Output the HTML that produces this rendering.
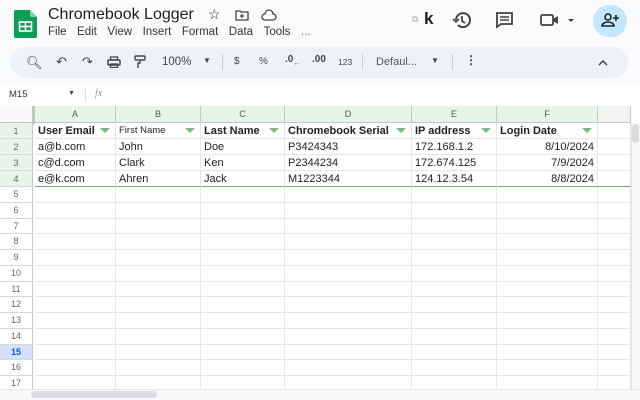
<!DOCTYPE html>
<html><head><meta charset="utf-8"><style>
*{margin:0;padding:0;box-sizing:border-box}
body{width:640px;height:400px;overflow:hidden;background:#f9fbfd;font-family:"Liberation Sans",Arial,sans-serif;position:relative;color:#1f1f1f}
.a{position:absolute}
.menu span{margin-right:10.5px}
.tb{color:#444;font-size:11px}
.grid{position:absolute;left:0;top:106px;width:640px;height:294px;background:#fff}
.ch{position:absolute;top:0;height:17px;background:#e6f4ea;border-right:1px solid #c4c7c5;border-bottom:1px solid #c4c7c5;font-size:9px;color:#555;text-align:center;line-height:16px}
.rh{position:absolute;left:0;width:33px;border-bottom:1px solid #d8d8d8;font-size:9px;color:#666;text-align:center}
.c{position:absolute;border-right:1px solid #e6e6e6;border-bottom:1px solid #e6e6e6;font-size:11px;padding-left:3px;white-space:nowrap;overflow:hidden;color:#222}
.f{position:absolute;right:5px;top:5px;width:0;height:0;border-left:5px solid transparent;border-right:5px solid transparent;border-top:5px solid #7cb88a}
</style></head><body>
<svg class="a" style="left:14px;top:10px" width="24" height="28" viewBox="0 0 24 28"><path d="M2 0h14l7 7v19a2 2 0 0 1-2 2H2a2 2 0 0 1-2-2V2a2 2 0 0 1 2-2z" fill="#0f9d58"/><path d="M16 0l7 7h-5a2 2 0 0 1-2-2z" fill="#87ceac"/><rect x="5.5" y="12" width="12" height="9" fill="none" stroke="#fff" stroke-width="1.6"/><line x1="5.5" y1="16.5" x2="17.5" y2="16.5" stroke="#fff" stroke-width="1.6"/><line x1="11.5" y1="12" x2="11.5" y2="21" stroke="#fff" stroke-width="1.6"/></svg>
<div class="a" style="left:48px;top:6px;font-size:16px;color:#1f1f1f">Chromebook Logger</div>
<div class="a" style="left:208px;top:6px;font-size:14px">☆</div>
<svg class="a" style="left:235px;top:9px" width="14" height="12"><path d="M1 2h4l1 1h7v8H1z" fill="none" stroke="#444" stroke-width="1.3"/><path d="M7 5v4M5 7h4" stroke="#444" stroke-width="1.2"/></svg>
<svg class="a" style="left:261px;top:9px" width="16" height="12"><path d="M4 11h8a3 3 0 0 0 0-6 4 4 0 0 0-8 0 3 3 0 0 0 0 6z" fill="none" stroke="#444" stroke-width="1.3"/></svg>
<div class="a menu" style="left:48px;top:26px;font-size:11.5px;color:#333"><span>File</span><span>Edit</span><span>View</span><span>Insert</span><span>Format</span><span>Data</span><span>Tools</span><span style="color:#777">...</span></div>
<div class="a" style="left:412px;top:14px;font-size:9px;color:#aaa">⧉</div>
<div class="a" style="left:424px;top:9px;font-size:17px;font-weight:bold">k</div>
<svg class="a" style="left:452px;top:10px" width="20" height="20" viewBox="0 0 20 20"><path d="M4 10a7 7 0 1 1 2 5" fill="none" stroke="#444" stroke-width="2"/><path d="M1 9l3 3 3-3" fill="none" stroke="#444" stroke-width="1.6"/><path d="M10 6v5l3 2" fill="none" stroke="#444" stroke-width="1.8"/></svg>
<svg class="a" style="left:495px;top:11px" width="20" height="18"><path d="M2 2h15v11H6l-4 3z" fill="none" stroke="#444" stroke-width="1.8"/><path d="M5 6h9M5 9h9" stroke="#444" stroke-width="1.5"/></svg>
<svg class="a" style="left:540px;top:12px" width="36" height="16"><rect x="1" y="3" width="12" height="10" rx="1.5" fill="none" stroke="#444" stroke-width="1.8"/><path d="M13 7l5-3v8l-5-3z" fill="#444"/><path d="M28 7h6l-3 3z" fill="#444"/></svg>
<div class="a" style="left:593px;top:5px;width:34px;height:32px;border-radius:16px;background:#c2e7ff"></div>
<svg class="a" style="left:601px;top:12px" width="18" height="16"><circle cx="7" cy="5" r="3" fill="none" stroke="#222" stroke-width="1.6"/><path d="M1 14a6 4 0 0 1 12 0z" fill="none" stroke="#222" stroke-width="1.6"/><path d="M15 3v6M12 6h6" stroke="#222" stroke-width="1.6"/></svg>
<div class="a" style="left:10px;top:47px;width:618px;height:31px;border-radius:16px;background:#edf2fa"></div>
<div class="a tb" style="left:26px;top:55px;font-size:13px">🔍︎</div>
<div class="a tb" style="left:56px;top:54px;font-size:13px">↶</div>
<div class="a tb" style="left:82px;top:54px;font-size:13px">↷</div>
<svg class="a" style="left:107px;top:56px" width="14" height="12"><rect x="1" y="4" width="12" height="5" rx="1" fill="none" stroke="#444" stroke-width="1.5"/><rect x="3.5" y="1" width="7" height="3" fill="none" stroke="#444" stroke-width="1.3"/><rect x="3.5" y="8" width="7" height="3.5" fill="none" stroke="#444" stroke-width="1.3"/></svg>
<svg class="a" style="left:134px;top:55px" width="12" height="14"><rect x="1" y="1" width="10" height="4" rx="1" fill="none" stroke="#444" stroke-width="1.4"/><path d="M6 5v3H4v5" fill="none" stroke="#444" stroke-width="1.4"/></svg>
<div class="a tb" style="left:162px;top:56px;font-size:11.5px">100%</div>
<div class="a tb" style="left:203px;top:56px;font-size:8px">▼</div>
<div class="a" style="left:222px;top:54px;width:1px;height:16px;background:#ccc"></div>
<div class="a tb" style="left:234px;top:56px;font-size:10px">$</div>
<div class="a tb" style="left:259px;top:56px;font-size:10px">%</div>
<div class="a tb" style="left:285px;top:54px;font-size:10px;font-weight:bold">.0<sub style="font-size:7px">←</sub></div>
<div class="a tb" style="left:312px;top:54px;font-size:10px;font-weight:bold">.00</div>
<div class="a tb" style="left:338px;top:57px;font-size:8.5px">123</div>
<div class="a" style="left:362px;top:54px;width:1px;height:16px;background:#ccc"></div>
<div class="a tb" style="left:376px;top:56px;font-size:11px;color:#555">Defaul...</div>
<div class="a tb" style="left:431px;top:56px;font-size:8px">▼</div>
<div class="a" style="left:452px;top:54px;width:1px;height:16px;background:#ccc"></div>
<div class="a tb" style="left:465px;top:53px;font-size:12px;font-weight:bold">⋮</div>
<svg class="a" style="left:598px;top:59px" width="10" height="7"><path d="M1 6l4-4 4 4" fill="none" stroke="#444" stroke-width="1.5"/></svg>
<div class="a" style="left:0;top:84px;width:640px;height:22px;background:#fff"></div>
<div class="a" style="left:9px;top:89px;font-size:9.5px;color:#333">M15</div>
<div class="a" style="left:68px;top:90px;font-size:7px;color:#444">▼</div>
<div class="a" style="left:85px;top:88px;width:1px;height:14px;background:#ddd"></div>
<div class="a" style="left:95px;top:88px;font-size:10px;color:#999;font-style:italic;font-family:'Liberation Serif',serif">fx</div>
<div class="grid">
<div class="a" style="left:0;top:0;width:35px;height:18px;background:#f8f9fa;border-right:3px solid #c4c7c5;border-bottom:2px solid #c4c7c5"></div>
<div class="ch" style="left:35px;width:81px">A</div>
<div class="ch" style="left:116px;width:85px">B</div>
<div class="ch" style="left:201px;width:84px">C</div>
<div class="ch" style="left:285px;width:127px">D</div>
<div class="ch" style="left:412px;width:85px">E</div>
<div class="ch" style="left:497px;width:101px">F</div>
<div class="ch" style="left:598px;width:33px;background:#f1f3f1"></div>
</div>
<div id="rows"></div>
<script>
var r=document.getElementById('rows'),h='';
var cols=[35,116,201,285,412,497,598,631];
var data=[["User Email","First Name","Last Name","Chromebook Serial","IP address","Login Date"],
["a@b.com","John","Doe","P3424343","172.168.1.2","8/10/2024"],
["c@d.com","Clark","Ken","P2344234","172.674.125","7/9/2024"],
["e@k.com","Ahren","Jack","M1223344","124.12.3.54","8/8/2024"]];
var y=123;
for(var i=1;i<=17;i++){var rh=i<=4?16:15.75;
var bg=i<=4?'#e6f4ea':(i==15?'#d3e3fd':'#fff');
h+='<div class="rh a" style="top:'+y+'px;height:'+rh+'px;line-height:'+rh+'px;background:'+bg+';border-right:1px solid #c4c7c5;'+(i==15?'color:#0b57d0;font-weight:bold':'')+'">'+i+'</div>';
for(var c=0;c<7;c++){var d=(i<=4&&c<6)?data[i-1][c]:'';
var st='left:'+cols[c]+'px;top:'+y+'px;width:'+(cols[c+1]-cols[c])+'px;height:'+rh+'px;line-height:'+rh+'px;';
if(i==1){st+=(c==1?'font-size:9.5px;':'font-weight:bold;');}
if(c==5&&i>1)st+='text-align:right;padding-right:3px;';
if(i==4)st+='border-bottom:1px solid #7aa67e;';
h+='<div class="c" style="'+st+'">'+d+(i==1&&c<6?'<span class="f"></span>':'')+'</div>';}
y+=rh;}
r.innerHTML=h;
</script>
<div class="a" style="left:631px;top:123px;width:9px;height:277px;background:#f8f8f8;border-left:1px solid #e6e6e6"></div>
<div class="a" style="left:632px;top:124px;width:7px;height:19px;border-radius:4px;background:#dadce0"></div>
<div class="a" style="left:0;top:389px;width:640px;height:11px;background:#f8f9fa;border-top:1px solid #e6e6e6"></div>
<div class="a" style="left:31px;top:391px;width:126px;height:7px;border-radius:4px;background:#dadce0"></div>
</body></html>
